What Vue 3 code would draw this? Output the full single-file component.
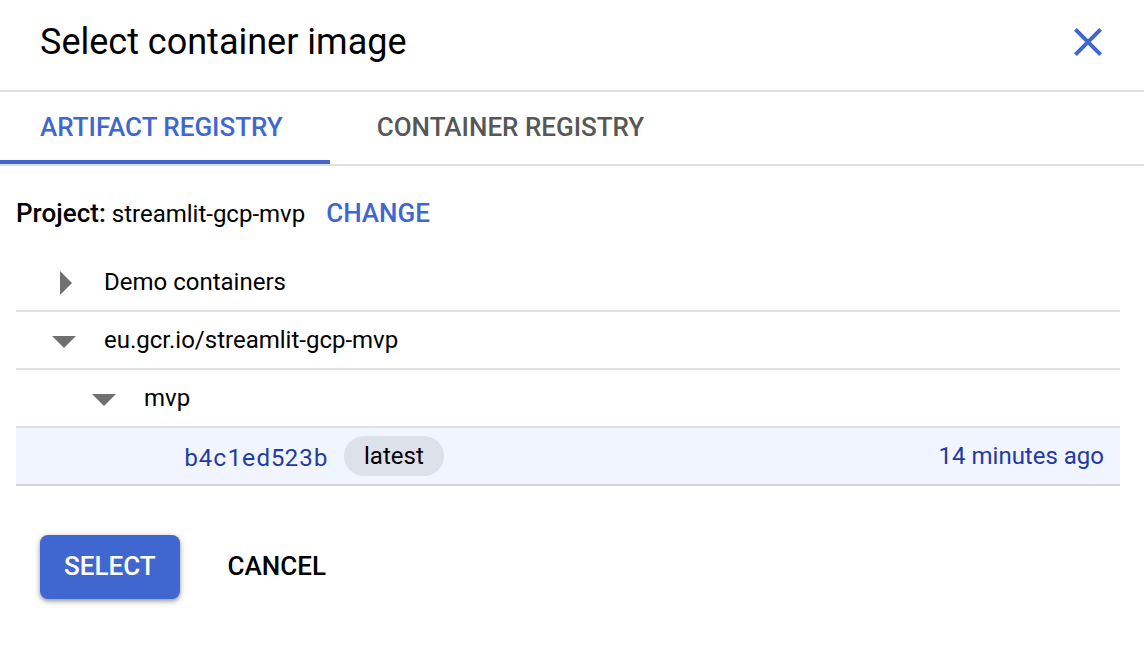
<script setup>
import { ref } from 'vue'

const tabs = ['Artifact Registry', 'Container Registry']
const activeTab = ref(0)
const nodes = ref([
  { name: 'Demo containers', level: 0, open: false },
  { name: 'eu.gcr.io/streamlit-gcp-mvp', level: 0, open: true },
  { name: 'mvp', level: 1, open: true },
])
</script>

<template>
  <main class="panel">
    <header class="header">
      <h1>Select container image</h1>
      <button class="close" type="button" aria-label="Close">
        <svg viewBox="0 0 28 28" width="28" height="28" aria-hidden="true">
          <path d="M1.4 1.4 26.6 26.6M26.6 1.4 1.4 26.6" fill="none" stroke="currentColor" stroke-width="4" />
        </svg>
      </button>
    </header>

    <nav class="tabs" role="tablist">
      <button
        v-for="(tab, i) in tabs"
        :key="tab"
        class="tab"
        :class="{ active: i === activeTab }"
        type="button"
        role="tab"
        :aria-selected="i === activeTab"
        @click="activeTab = i"
      >{{ tab }}</button>
    </nav>

    <section class="content">
      <div class="project">
        <strong>Project:</strong>
        <span class="project-name">streamlit-gcp-mvp</span>
        <button class="change" type="button">Change</button>
      </div>

      <ul class="tree">
        <li v-for="node in nodes" :key="node.name" class="row" :class="'level-' + node.level">
          <button
            class="toggle"
            type="button"
            :aria-label="'Toggle ' + node.name"
            :aria-expanded="node.open"
            @click="node.open = !node.open"
          >
            <svg viewBox="0 0 24 24" width="24" height="24" aria-hidden="true">
              <path :d="node.open ? 'M0 7h24L12 19z' : 'M8 0l12 12L8 24z'" fill="currentColor" />
            </svg>
          </button>
          <span>{{ node.name }}</span>
        </li>
        <li class="row selected">
          <a class="digest" href="#">b4c1ed523b</a>
          <span class="tag">latest</span>
          <time class="age">14 minutes ago</time>
        </li>
      </ul>
    </section>

    <footer class="actions">
      <button class="select" type="button">Select</button>
      <button class="cancel" type="button">Cancel</button>
    </footer>
  </main>
</template>

<style>
body {
  background: #fff;
}
</style>

<style scoped>
.panel {
  font-family: Roboto, "Liberation Sans", sans-serif;
  font-size: 24px;
  line-height: 32px;
  color: #000;
}
button {
  margin: 0;
  padding: 0;
  border: 0;
  background: none;
  font: inherit;
  color: inherit;
  cursor: pointer;
}
svg {
  display: block;
}
.header {
  display: flex;
  align-items: center;
  justify-content: space-between;
  padding: 18px 42px 24px 40px;
  border-bottom: 2px solid #e0e0e0;
}
h1 {
  margin: 0;
  font-size: 36px;
  line-height: 48px;
  font-weight: 400;
}
.close,
.change,
.tab.active {
  color: #4067cf;
}
.tabs {
  display: flex;
  border-bottom: 2px solid #e0e0e0;
}
.tab {
  padding: 19px 47px 17px;
  border-bottom: 4px solid transparent;
  color: #575757;
}
.tab:first-child {
  padding-left: 40px;
}
.tab.active {
  border-bottom-color: #4067cf;
}
.tab,
.change,
.actions button {
  font-size: 26px;
  font-weight: 500;
  text-transform: uppercase;
}
.content {
  padding: 31px 24px 0 16px;
}
.project {
  display: flex;
  align-items: baseline;
}
strong {
  font-size: 26px;
  font-weight: 500;
}
.project-name {
  margin: 0 21px 0 6px;
}
.tree {
  margin: 24px 0 0;
  padding: 0;
  list-style: none;
}
.row {
  display: flex;
  align-items: center;
  min-height: 56px;
  padding: 0 16px 0 36px;
  border-bottom: 2px solid #e0e0e0;
}
.level-1 {
  padding-left: 76px;
}
.toggle {
  margin-right: 28px;
  padding-top: 2px;
  color: #707070;
}
.selected {
  padding-left: 168px;
  background: #f0f5ff;
  border-bottom-color: #d2d6de;
  color: #2339a4;
}
.digest {
  padding-top: 2px;
  color: inherit;
  font-family: "Roboto Mono", "Liberation Mono", monospace;
  text-decoration: none;
}
.tag {
  margin-left: 16px;
  padding: 4px 20px;
  border-radius: 20px;
  background: #dde1ea;
  color: #000;
}
.age {
  margin-left: auto;
}
.actions {
  display: flex;
  gap: 24px;
  padding: 49px 40px;
}
.actions button {
  padding: 15px 24px 17px;
  border-radius: 8px;
}
.actions .select {
  background: #4067cf;
  color: #fff;
  box-shadow: 0 2px 4px rgba(0, 0, 0, 0.35), 0 2px 10px rgba(0, 0, 0, 0.12);
}
</style>
